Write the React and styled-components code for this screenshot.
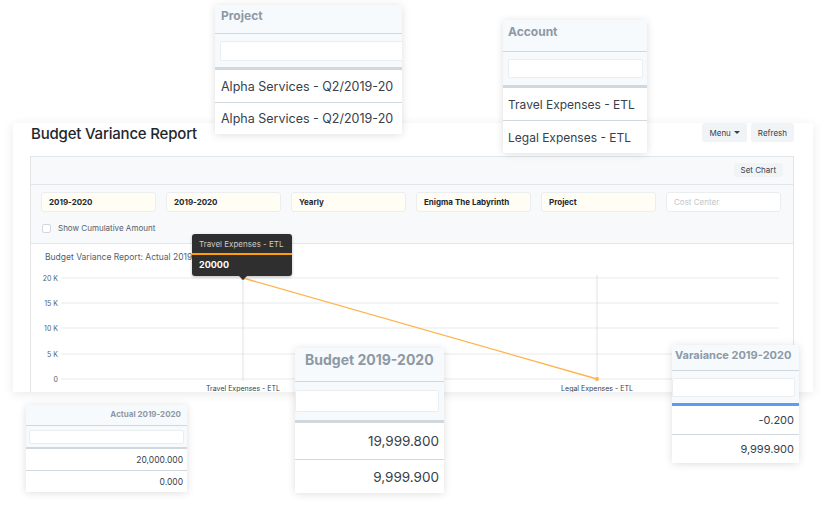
import React from 'react'
import styled, { createGlobalStyle } from 'styled-components'

const GlobalStyle = createGlobalStyle`
    html, body {
        margin: 0;
        padding: 0;
        background: #fff;
    }
    body {
        font-family: Inter, "Noto Sans", "Liberation Sans", sans-serif;
        color: #36414c;
    }
`

// STYLES
const Canvas = styled.div`
    position: relative;
    width: 826px;
    height: 516px;
    overflow: hidden;
    background: #fff;
    padding: 123px 13px 0 13px;
    box-sizing: border-box;
`

const Panel = styled.div`
    width: 800px;
    height: 269px;
    background: #fff;
    box-shadow: 0 2px 10px rgba(0, 0, 0, 0.09);
    display: flex;
    flex-direction: column;
`

const Header = styled.div`
    height: 33px;
    display: flex;
    justify-content: space-between;
    align-items: flex-start;
    padding: 0 19px 0 18px;
    flex-shrink: 0;
`

const Title = styled.h1`
    margin: 1px 0 0;
    font-size: 15px;
    font-weight: 500;
    color: #1f272e;
    letter-spacing: -0.2px;
`

const Actions = styled.div`
    display: flex;
    gap: 4px;
`

const Btn = styled.button`
    border: none;
    background: #f0f4f7;
    border-radius: 3px;
    font-family: inherit;
    font-size: 8px;
    color: #36414c;
    height: ${p => p.$h || 19}px;
    padding: 0 7px;
    display: flex;
    align-items: center;
    gap: 3px;
`

const Caret = styled.span`
    width: 0;
    height: 0;
    border-left: 3px solid transparent;
    border-right: 3px solid transparent;
    border-top: 3px solid #36414c;
`

const Body = styled.div`
    flex: 1;
    margin: 0 19px 0 17px;
    border: 1px solid #e2e6e9;
    border-bottom: none;
    display: flex;
    flex-direction: column;
    min-height: 0;
`

const Toolbar = styled.div`
    height: 28px;
    box-sizing: border-box;
    background: #f7f9fb;
    border-bottom: 1px solid #e2e6e9;
    display: flex;
    justify-content: flex-end;
    align-items: flex-start;
    padding: 6px 10px 0 0;
    flex-shrink: 0;
`

const Filters = styled.div`
    background: #f7f9fb;
    border-bottom: 1px solid #e2e6e9;
    padding: 7px 10px 0 10px;
    height: 59px;
    box-sizing: border-box;
    flex-shrink: 0;
`

const FieldRow = styled.div`
    display: flex;
    gap: 10px;
`

const Field = styled.div`
    width: 115px;
    height: 20px;
    box-sizing: border-box;
    border: 1px solid #ebeef0;
    border-radius: 3px;
    background: ${p => (p.$empty ? '#fff' : '#fffdf4')};
    color: ${p => (p.$empty ? '#c0c6cc' : '#1f272e')};
    font-size: 8px;
    font-weight: ${p => (p.$empty ? 400 : 700)};
    display: flex;
    align-items: center;
    padding-left: 7px;
`

const CheckRow = styled.label`
    display: flex;
    align-items: center;
    gap: 7px;
    margin-top: 11px;
    margin-left: 1px;
    font-size: 8px;
    color: #555f69;
`

const Box = styled.span`
    width: 7px;
    height: 7px;
    border: 1px solid #d1d8dd;
    border-radius: 2px;
    background: #fff;
`

const ChartArea = styled.div`
    position: relative;
    flex: 1;
    background: #fff;
`

const Tooltip = styled.div`
    position: absolute;
    left: 161px;
    top: -10px;
    width: 100px;
    background: #2f2f2f;
    border-radius: 3px;
    color: #fff;
    font-size: 8px;
    box-shadow: 0 1px 3px rgba(0, 0, 0, 0.25);

    &::after {
        content: '';
        position: absolute;
        left: 47px;
        bottom: -4px;
        border-left: 4px solid transparent;
        border-right: 4px solid transparent;
        border-top: 4px solid #2f2f2f;
    }
`

const TipTitle = styled.div`
    color: #c9c9c9;
    padding: 5px 7px 4px;
    border-bottom: 2px solid #ffa00a;
`

const TipValue = styled.div`
    font-weight: 700;
    font-size: 9px;
    padding: 4px 7px 6px;
`

const Card = styled.div`
    position: absolute;
    left: ${p => p.$x}px;
    top: ${p => p.$y}px;
    width: ${p => p.$w}px;
    background: #fff;
    box-shadow: 0 1px 8px rgba(0, 0, 0, 0.13);
    overflow: hidden;
`

const CardHead = styled.div`
    height: ${p => p.$h}px;
    box-sizing: border-box;
    background: #f7fafc;
    border-bottom: 1px solid #d1d8dd;
    color: #8d99a6;
    font-weight: 700;
    font-size: ${p => p.$size}px;
    display: flex;
    align-items: flex-start;
    justify-content: ${p => (p.$right ? 'flex-end' : 'flex-start')};
    padding: ${p => p.$pt}px ${p => p.$pr}px 0 ${p => p.$pl}px;
    white-space: nowrap;
`

const Search = styled.div`
    height: ${p => p.$h}px;
    box-sizing: border-box;
    background: #f7fafc;
    border-bottom: ${p => p.$bw}px solid ${p => p.$bc || '#d1d8dd'};
    display: flex;
    align-items: center;
    padding: 0 ${p => p.$pr}px 0 ${p => p.$pl}px;
`

const SearchInput = styled.div`
    flex: 1;
    height: ${p => p.$h}px;
    background: #fff;
    border: 1px solid #ebeef0;
    border-radius: 2px;
    margin-right: ${p => p.$mr || 0}px;
`

const Row = styled.div`
    height: ${p => p.$h}px;
    box-sizing: border-box;
    border-bottom: 1px solid #d1d8dd;
    display: flex;
    align-items: center;
    justify-content: ${p => (p.$right ? 'flex-end' : 'flex-start')};
    padding: 0 ${p => p.$pr}px 0 ${p => p.$pl}px;
    font-size: ${p => p.$size}px;
    color: #36414c;
    white-space: nowrap;

    &:last-child {
        border-bottom: none;
    }
`

const ChartSvg = styled.svg`
    display: block;
    font-family: Inter, "Noto Sans", sans-serif;
`

const yTicks = [
    { label: '20 K', y: 34 },
    { label: '15 K', y: 59 },
    { label: '10 K', y: 84 },
    { label: '5 K', y: 110 },
    { label: '0', y: 135 },
]

function Chart() {
    return (
        <ChartSvg width="762" height="148" viewBox="0 0 762 148">
            <text x="14" y="16" fontSize="8.5" fill="#555f69">
                Budget Variance Report: Actual 2019-2020 vs Account
            </text>
            {yTicks.map(t => (
                <g key={t.label}>
                    <line x1="30" x2="748" y1={t.y} y2={t.y} stroke="#e6e9ec" strokeWidth="1" />
                    <text x="27" y={t.y + 3} fontSize="7" fill="#555f69" textAnchor="end">
                        {t.label}
                    </text>
                </g>
            ))}
            <line x1="212" x2="212" y1="31" y2="137" stroke="#dde1e4" />
            <line x1="566" x2="566" y1="31" y2="137" stroke="#dde1e4" />
            <text x="212" y="149" fontSize="7" fill="#36414c" textAnchor="middle" dy="-2">
                Travel Expenses - ETL
            </text>
            <text x="566" y="149" fontSize="7" fill="#36414c" textAnchor="middle" dy="-2">
                Legal Expenses - ETL
            </text>
            <line x1="212" y1="34" x2="566" y2="135" stroke="#fdb44b" strokeWidth="1.3" />
            <circle cx="212" cy="34" r="2" fill="#fdb44b" />
            <circle cx="566" cy="135" r="2" fill="#fdb44b" />
        </ChartSvg>
    )
}

function App() {
    return (
        <>
            <GlobalStyle />
            <Canvas>
                <Panel>
                    <Header>
                        <Title>Budget Variance Report</Title>
                        <Actions>
                            <Btn>Menu <Caret /></Btn>
                            <Btn>Refresh</Btn>
                        </Actions>
                    </Header>
                    <Body>
                        <Toolbar>
                            <Btn $h={14}>Set Chart</Btn>
                        </Toolbar>
                        <Filters>
                            <FieldRow>
                                <Field>2019-2020</Field>
                                <Field>2019-2020</Field>
                                <Field>Yearly</Field>
                                <Field>Enigma The Labyrinth</Field>
                                <Field>Project</Field>
                                <Field $empty>Cost Center</Field>
                            </FieldRow>
                            <CheckRow>
                                <Box />
                                Show Cumulative Amount
                            </CheckRow>
                        </Filters>
                        <ChartArea>
                            <Chart />
                            <Tooltip>
                                <TipTitle>Travel Expenses - ETL</TipTitle>
                                <TipValue>20000</TipValue>
                            </Tooltip>
                        </ChartArea>
                    </Body>
                </Panel>

                {/* floating column cards */}
                <Card $x={215} $y={5} $w={187}>
                    <CardHead $h={29} $size={12} $pt={3} $pl={6} $pr={6}>Project</CardHead>
                    <Search $h={36} $bw={3} $pl={5} $pr={0}>
                        <SearchInput $h={18} $mr={-10} />
                    </Search>
                    <Row $h={33} $size={12.5} $pl={6} $pr={6}>Alpha Services - Q2/2019-20</Row>
                    <Row $h={31} $size={12.5} $pl={6} $pr={6}>Alpha Services - Q2/2019-20</Row>
                </Card>

                <Card $x={503} $y={20} $w={144}>
                    <CardHead $h={32} $size={12} $pt={4} $pl={5} $pr={5}>Account</CardHead>
                    <Search $h={36} $bw={3} $pl={5} $pr={4}>
                        <SearchInput $h={17} />
                    </Search>
                    <Row $h={33} $size={12} $pl={5} $pr={5}>Travel Expenses - ETL</Row>
                    <Row $h={32} $size={12} $pl={5} $pr={5}>Legal Expenses - ETL</Row>
                </Card>

                <Card $x={26} $y={405} $w={161}>
                    <CardHead $h={21} $size={8} $pt={4} $pl={4} $pr={6} $right>Actual 2019-2020</CardHead>
                    <Search $h={23} $bw={2} $pl={3} $pr={3}>
                        <SearchInput $h={12} />
                    </Search>
                    <Row $h={22} $size={8.5} $pl={4} $pr={4} $right>20,000.000</Row>
                    <Row $h={21} $size={8.5} $pl={4} $pr={4} $right>0.000</Row>
                </Card>

                <Card $x={295} $y={348} $w={149}>
                    <CardHead $h={34} $size={14} $pt={3} $pl={10} $pr={4}>Budget 2019-2020</CardHead>
                    <Search $h={41} $bw={3} $pl={0} $pr={5}>
                        <SearchInput $h={20} />
                    </Search>
                    <Row $h={37} $size={13.5} $pl={4} $pr={5} $right>19,999.800</Row>
                    <Row $h={33} $size={13.5} $pl={4} $pr={5} $right>9,999.900</Row>
                </Card>

                <Card $x={672} $y={345} $w={127}>
                    <CardHead $h={26} $size={11} $pt={3} $pl={3} $pr={2}>Varaiance 2019-2020</CardHead>
                    <Search $h={35} $bw={3} $bc="#5e9cf0" $pl={0} $pr={4}>
                        <SearchInput $h={17} />
                    </Search>
                    <Row $h={29} $size={11} $pl={4} $pr={5} $right>-0.200</Row>
                    <Row $h={28} $size={11} $pl={4} $pr={5} $right>9,999.900</Row>
                </Card>
            </Canvas>
        </>
    )
}

export default App
